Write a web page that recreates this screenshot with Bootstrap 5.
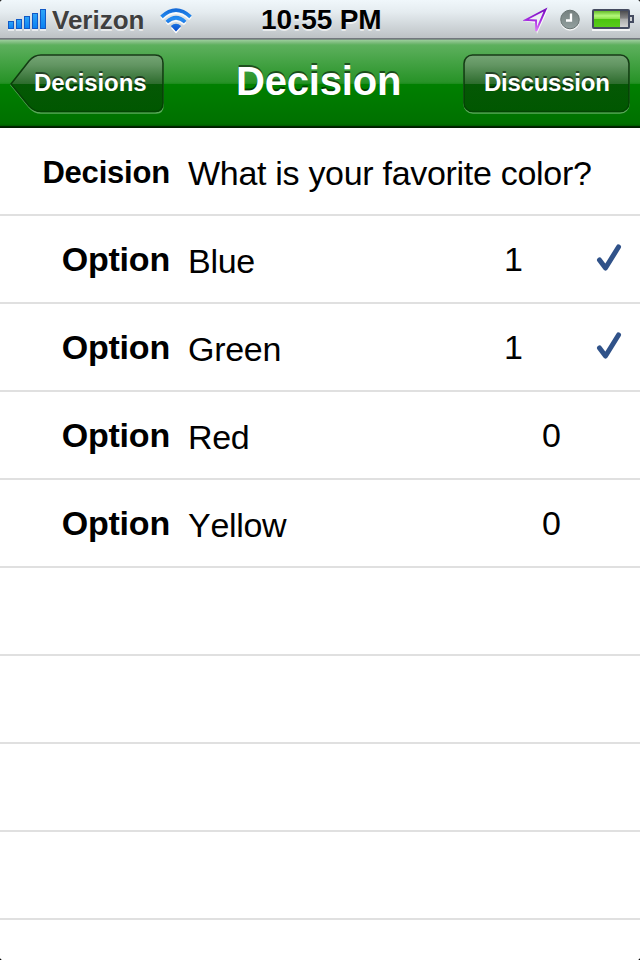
<!DOCTYPE html>
<html lang="en">
<head>
<meta charset="utf-8">
<meta name="viewport" content="width=device-width, initial-scale=1">
<title>Decision</title>
<link href="https://cdn.jsdelivr.net/npm/bootstrap@5.3.0/dist/css/bootstrap.min.css" rel="stylesheet">
<style>
body{font-family:"Liberation Sans",Arial,sans-serif;background:#fff;color:#000;line-height:1}
.phone{width:640px;height:960px}
.status-strip{height:40px;background:linear-gradient(#f0f7fb,#e5ecf0 30%,#bdc2c5 95%,#73777e 95%,#73777e 98%,#8fc58f);padding:0 6px 0 8px;text-shadow:0 2px 0 rgba(255,255,255,.6)}
.carrier{font-size:26px;color:#3f3f3f;letter-spacing:0;margin-left:5px;width:108px}
.clock{font-size:28px;left:261px;top:6px;letter-spacing:-.1px}
.battery{margin-left:11px}
.topbar{height:88px;padding:0 10px;background:linear-gradient(#9bce9b 0,#78b978 3px,#5db05d 5px,#289328 42px,#1a8b1a 44px,#008000 44px,#007000 84px,#005800 86px,#002800 86px,#001c00 100%)}
.nav-title{font-size:40px;color:#fff;text-shadow:0 -2px 0 rgba(0,0,0,.5);left:236px;top:21px;letter-spacing:-.2px}
.bar-btn{height:60px;font-size:24px;color:#fff;text-shadow:0 -2px 0 rgba(0,0,0,.5);margin-top:-1px;letter-spacing:-.1px}
.bar-btn:hover{color:#fff}
.bar-btn span{position:relative}
.bar-btn svg{left:0;top:0}
.back-btn{width:154px;padding:0 0 1px 24px}
.talk-btn{width:167px;padding:0 0 1px 21px;letter-spacing:-.25px}
.cell{height:88px;border-bottom:2px solid #e0e0e0;font-size:34px}
.cell:last-child{height:40px;border-bottom:0}
.cell-label{width:171px;font-weight:700;text-align:right;letter-spacing:-.2px;padding-right:1px}
.cell-label.tight{font-size:31px;padding-top:3px}
.cell-value{margin-left:17px;padding-top:4px;white-space:nowrap;letter-spacing:-.3px;font-kerning:none}
.tally{margin-right:79px}
.picked .tally{margin-right:73px}
.picked svg{margin:-3px 17px 0 0}
.corner{width:4px;height:4px}
.c-tl{left:0;top:0;background:radial-gradient(circle at 100% 100%,transparent 4px,#222 5px)}
.c-tr{right:0;top:0;background:radial-gradient(circle at 0 100%,transparent 4px,#222 5px)}
.c-bl{left:0;bottom:0;background:radial-gradient(circle at 100% 0,transparent 4px,#000 5px)}
.c-br{right:0;bottom:0;background:radial-gradient(circle at 0 0,transparent 4px,#000 5px)}
</style>
<script src="https://cdn.jsdelivr.net/npm/bootstrap@5.3.0/dist/js/bootstrap.bundle.min.js"></script>
</head>
<body>
<div class="phone position-relative overflow-hidden">
<header class="status-strip d-flex align-items-center fw-bold position-relative">
<svg width="39" height="24" viewBox="0 0 39 24">
<defs><linearGradient id="sig" x2="0" y2="1"><stop stop-color="#2fa5f8"/><stop offset="1" stop-color="#0a80f2"/></linearGradient></defs>
<path d="M0 22h6m2 0h6m2 0h6m2 0h6m2 0h6" stroke="#fff" stroke-opacity=".6" stroke-width="2"/>
<g fill="url(#sig)" stroke="#1159c6"><rect x=".5" y="13.500" width="5" height="7"/><rect x="8.500" y="11.500" width="5" height="9"/><rect x="16.500" y="8.500" width="5" height="12"/><rect x="24.500" y="5.500" width="5" height="15"/><rect x="32.500" y="1.500" width="5" height="19"/></g>
</svg>
<span class="carrier">Verizon</span>
<svg width="34" height="28" viewBox="0 0 34 28" fill="none">
<defs><linearGradient id="wf" gradientUnits="userSpaceOnUse" x1="0" y1="2" x2="0" y2="26"><stop stop-color="#1267d5"/><stop offset=".45" stop-color="#258ef3"/><stop offset="1" stop-color="#0948c8"/></linearGradient></defs>
<g transform="translate(0 2)" stroke="#fff" stroke-opacity=".8" stroke-width="3.600"><path d="M1.500 10.800Q16 -2.500 30.500 10.800M6.800 16Q16 7.500 25.200 16"/><path d="M11 20Q16 16 21 20L16 25.500Z" fill="#fff" stroke="none"/></g>
<g stroke="url(#wf)" stroke-width="3.600"><path d="M1.500 10.800Q16 -2.500 30.500 10.800M6.800 16Q16 7.500 25.200 16"/></g><path d="M10.800 20Q16 15.500 21.200 20L16 25.500Z" fill="url(#wf)"/>
</svg>
<span class="clock position-absolute">10:55 PM</span>
<div class="d-flex align-items-center ms-auto">
<svg width="26" height="28" viewBox="0 0 26 28">
<defs><linearGradient id="loc" x2="0" y2="1"><stop stop-color="#7a0fc0"/><stop offset=".5" stop-color="#a52be0"/><stop offset="1" stop-color="#e07bfa"/></linearGradient></defs>
<path d="M1 15L25 3.500L14 28L12 17Z" fill="#fff" opacity=".8"/>
<path d="M2.500 14L22.500 3.500L13.200 25L13 14.500Z" fill="#edf0f4" stroke="url(#loc)" stroke-width="1.900"/>
</svg>
<svg class="ms-2" width="24" height="26" viewBox="-1 0 24 26">
<defs><linearGradient id="clk" x2="0" y2="1"><stop stop-color="#75807f"/><stop offset="1" stop-color="#93a09f"/></linearGradient></defs>
<circle cx="12" cy="14" r="9.700" fill="#fff" opacity=".8"/><circle cx="12" cy="12.500" r="9.300" fill="url(#clk)" stroke="#687472"/><path d="M13 6.500v7H8" stroke="#fff" stroke-width="2.300" fill="none"/>
</svg>
<svg class="battery" width="42" height="24" viewBox="0 0 42 24">
<defs><linearGradient id="bat" x2="0" y2="1"><stop stop-color="#66bd2a"/><stop offset=".3" stop-color="#b4f87a"/><stop offset=".48" stop-color="#8fe34b"/><stop offset=".52" stop-color="#4bc40e"/><stop offset="1" stop-color="#59cc1a"/></linearGradient><linearGradient id="vac" x2="0" y2="1"><stop stop-color="#4d4d4f"/><stop offset=".45" stop-color="#868686"/><stop offset=".5" stop-color="#aaa"/><stop offset="1" stop-color="#d3d3d3"/></linearGradient></defs>
<path d="M0 22h38" stroke="#fff" stroke-opacity=".8" stroke-width="2"/><rect x="1" y="2" width="36" height="18" rx="1" fill="#eef4e9" stroke="#444b60" stroke-width="2"/><rect x="2" y="3" width="26" height="16" fill="url(#bat)"/><rect x="28" y="3" width="8" height="16" fill="url(#vac)"/><path d="M38 8h3v6h-3" fill="#cfd2d5" stroke="#444b60" stroke-width="2"/>
</svg>
</div>
</header>
<nav class="topbar d-flex align-items-center justify-content-between position-relative">
<a class="bar-btn back-btn position-relative d-flex align-items-center fw-bold text-decoration-none" href="#">
<svg class="position-absolute" width="154" height="60" viewBox="0 0 154 60">
<defs><linearGradient id="btn" x2="0" y2="1"><stop stop-color="#75a575"/><stop offset=".18" stop-color="#629562"/><stop offset=".51" stop-color="#2d6c2d"/><stop offset=".51" stop-color="#055805"/><stop offset="1" stop-color="#005700"/></linearGradient>
<linearGradient id="rim" x2="0" y2="1"><stop stop-color="#173a17"/><stop offset=".6" stop-color="#073f07"/><stop offset="1" stop-color="#024502"/></linearGradient></defs>
<path d="M1 31L19 8Q24 2 31 2H146Q153 2 153 10V51Q153 59 146 59H31Q24 59 19 53Z" fill="none" stroke="#8ac58a" stroke-opacity=".65" stroke-width="1.500"/>
<path d="M1 30L19 7Q24 1 31 1H145Q153 1 153 9V49Q153 57.500 145 57.500H31Q24 57.500 19 52Z" fill="url(#btn)" stroke="url(#rim)" stroke-width="1.600"/>
</svg>
<span>Decisions</span></a>
<h1 class="nav-title position-absolute fw-bold m-0 lh-1">Decision</h1>
<a class="bar-btn talk-btn position-relative d-flex align-items-center fw-bold text-decoration-none" href="#">
<svg class="position-absolute" width="167" height="60" viewBox="0 0 167 60"><rect x="1" y="2" width="165" height="57" rx="9" fill="none" stroke="#8ac58a" stroke-opacity=".65" stroke-width="1.500"/><rect x="1" y="1" width="165" height="56.500" rx="8.500" fill="url(#btn)" stroke="url(#rim)" stroke-width="1.600"/></svg>
<span>Discussion</span></a>
</nav>
<main>
<div class="cell d-flex align-items-center"><div class="cell-label tight">Decision</div><div class="cell-value">What is your favorite color?</div></div>
<div class="cell picked d-flex align-items-center"><div class="cell-label">Option</div><div class="cell-value">Blue</div><div class="tally ms-auto">1</div><svg width="27" height="29" viewBox="0 0 27 29"><path d="M3.500 17L9.500 25L22.500 4" fill="none" stroke="#305289" stroke-width="5" stroke-linecap="round" stroke-linejoin="round"/></svg></div>
<div class="cell picked d-flex align-items-center"><div class="cell-label">Option</div><div class="cell-value">Green</div><div class="tally ms-auto">1</div><svg width="27" height="29" viewBox="0 0 27 29"><path d="M3.500 17L9.500 25L22.500 4" fill="none" stroke="#305289" stroke-width="5" stroke-linecap="round" stroke-linejoin="round"/></svg></div>
<div class="cell d-flex align-items-center"><div class="cell-label">Option</div><div class="cell-value">Red</div><div class="tally ms-auto">0</div></div>
<div class="cell d-flex align-items-center"><div class="cell-label">Option</div><div class="cell-value">Yellow</div><div class="tally ms-auto">0</div></div>
<div class="cell"></div><div class="cell"></div><div class="cell"></div><div class="cell"></div><div class="cell"></div>
</main>
<i class="corner c-tl position-absolute"></i><i class="corner c-tr position-absolute"></i><i class="corner c-bl position-absolute"></i><i class="corner c-br position-absolute"></i>
</div>
</body>
</html>
